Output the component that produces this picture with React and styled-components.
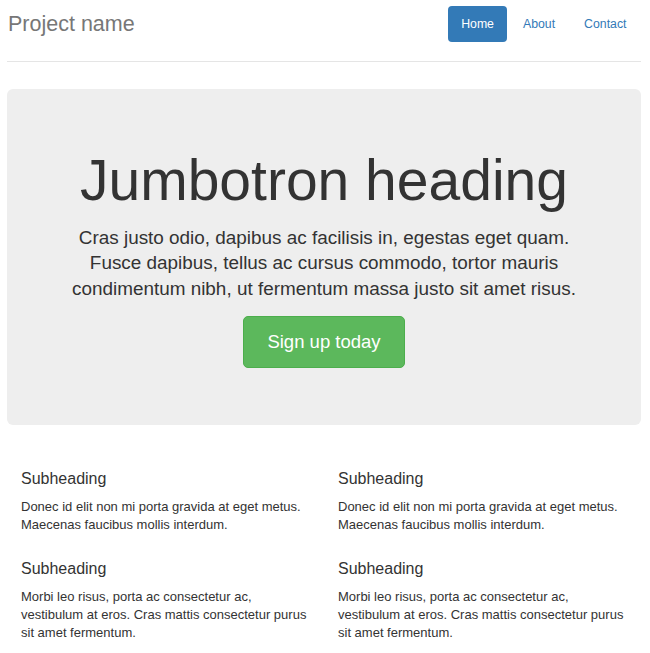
import React from "react";
import styled, { createGlobalStyle } from "styled-components";

const NAV_ITEMS = ["Home", "About", "Contact"];

const FEATURES = [
  {
    title: "Subheading",
    text: "Donec id elit non mi porta gravida at eget metus. Maecenas faucibus mollis interdum.",
  },
  {
    title: "Subheading",
    text: "Morbi leo risus, porta ac consectetur ac, vestibulum at eros. Cras mattis consectetur purus sit amet fermentum.",
  },
];

const App = () => (
  <>
    <GlobalStyle />
    <Page>
      <Header>
        <Brand>Project name</Brand>
        <Nav>
          {NAV_ITEMS.map((item, i) => (
            <NavLink key={item} href="#" $active={i === 0}>
              {item}
            </NavLink>
          ))}
        </Nav>
      </Header>

      <Jumbotron>
        <Heading>Jumbotron heading</Heading>
        <Lead>
          Cras justo odio, dapibus ac facilisis in, egestas eget quam. Fusce
          dapibus, tellus ac cursus commodo, tortor mauris condimentum nibh, ut
          fermentum massa justo sit amet risus.
        </Lead>
        <Button href="#">Sign up today</Button>
      </Jumbotron>

      <Marketing>
        {[0, 1].map((col) => (
          <Column key={col}>
            {FEATURES.map((f, i) => (
              <Feature key={i}>
                <Subheading>{f.title}</Subheading>
                <Text>{f.text}</Text>
              </Feature>
            ))}
          </Column>
        ))}
      </Marketing>
    </Page>
  </>
);

const GlobalStyle = createGlobalStyle`
  body {
    margin: 0;
    background: #fff;
    color: #333;
    font-family: "Liberation Sans", Arial, sans-serif;
  }
  * { box-sizing: border-box; }
`;

const Page = styled.div`
  width: 634px;
  margin-left: 7px;
  padding-top: 6px;
`;

const Header = styled.header`
  display: flex;
  justify-content: space-between;
  align-items: center;
  padding-bottom: 19px;
  border-bottom: 1px solid #e5e5e5;
`;

const Brand = styled.h3`
  margin: 0 0 0 1px;
  font-size: 21.5px;
  font-weight: 400;
  line-height: 36px;
  color: #777;
`;

const Nav = styled.nav`
  display: flex;
  gap: 2px;
  margin-right: 1px;
`;

const NavLink = styled.a`
  display: block;
  padding: 0 13.5px;
  line-height: 36px;
  font-size: 12.3px;
  border-radius: 4px;
  text-decoration: none;
  color: ${(p) => (p.$active ? "#fff" : "#337ab7")};
  background: ${(p) => (p.$active ? "#337ab7" : "transparent")};
`;

const Jumbotron = styled.section`
  margin-top: 27px;
  padding: 42px 52px 57px;
  background: #eee;
  border-radius: 6px;
  display: flex;
  flex-direction: column;
  align-items: center;
  text-align: center;
`;

const Heading = styled.h1`
  margin: 18px 0 13px;
  font-size: 57px;
  font-weight: 400;
  line-height: 1.1;
  color: #333;
`;

const Lead = styled.p`
  margin: 0 0 15px;
  font-size: 18.9px;
  line-height: 25.5px;
  color: #333;
`;

const Button = styled.a`
  display: block;
  padding: 13px 23px;
  font-size: 18.5px;
  line-height: 24px;
  color: #fff;
  background: #5cb85c;
  border: 1px solid #4cae4c;
  border-radius: 5px;
  text-decoration: none;
`;

const Marketing = styled.section`
  display: grid;
  grid-template-columns: 1fr 1fr;
  margin-top: 36px;
`;

const Column = styled.div`
  padding: 0 14px;
`;

const Feature = styled.div`
  & + & {
    margin-top: 26.5px;
  }
`;

const Subheading = styled.h4`
  margin: 9px 0 10px;
  font-size: 16px;
  font-weight: 400;
  line-height: 1.1;
  color: #333;
`;

const Text = styled.p`
  margin: 0;
  font-size: 13px;
  line-height: 18px;
  color: #333;
`;

export default App;
